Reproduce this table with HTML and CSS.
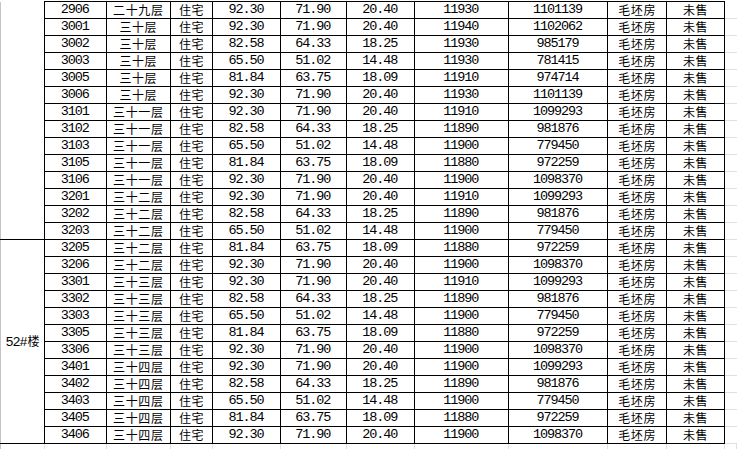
FILE: index.html
```html
<!DOCTYPE html>
<html lang="zh">
<head>
<meta charset="utf-8">
<title>52#楼</title>
<link rel="stylesheet" href="styles.css">
</head>
<body>
<table class="sheet">
<colgroup>
<col class="w-bld"><col class="w-no"><col class="w-fl"><col class="w-use"><col class="w-a"><col class="w-b"><col class="w-c"><col class="w-p"><col class="w-t"><col class="w-d"><col class="w-s"><col class="w-x">
</colgroup>
<tbody>
<tr><td class="bld top" rowspan="14"></td><td class="n">2906</td><td class="c">二十九层</td><td class="c">住宅</td><td class="n">92.30</td><td class="n">71.90</td><td class="n">20.40</td><td class="n">11930</td><td class="n">1101139</td><td class="c">毛坯房</td><td class="c">未售</td><td class="x"></td></tr>
<tr><td class="n">3001</td><td class="c">三十层</td><td class="c">住宅</td><td class="n">92.30</td><td class="n">71.90</td><td class="n">20.40</td><td class="n">11940</td><td class="n">1102062</td><td class="c">毛坯房</td><td class="c">未售</td><td class="x"></td></tr>
<tr><td class="n">3002</td><td class="c">三十层</td><td class="c">住宅</td><td class="n">82.58</td><td class="n">64.33</td><td class="n">18.25</td><td class="n">11930</td><td class="n">985179</td><td class="c">毛坯房</td><td class="c">未售</td><td class="x"></td></tr>
<tr><td class="n">3003</td><td class="c">三十层</td><td class="c">住宅</td><td class="n">65.50</td><td class="n">51.02</td><td class="n">14.48</td><td class="n">11930</td><td class="n">781415</td><td class="c">毛坯房</td><td class="c">未售</td><td class="x"></td></tr>
<tr><td class="n">3005</td><td class="c">三十层</td><td class="c">住宅</td><td class="n">81.84</td><td class="n">63.75</td><td class="n">18.09</td><td class="n">11910</td><td class="n">974714</td><td class="c">毛坯房</td><td class="c">未售</td><td class="x"></td></tr>
<tr><td class="n">3006</td><td class="c">三十层</td><td class="c">住宅</td><td class="n">92.30</td><td class="n">71.90</td><td class="n">20.40</td><td class="n">11930</td><td class="n">1101139</td><td class="c">毛坯房</td><td class="c">未售</td><td class="x"></td></tr>
<tr><td class="n">3101</td><td class="c">三十一层</td><td class="c">住宅</td><td class="n">92.30</td><td class="n">71.90</td><td class="n">20.40</td><td class="n">11910</td><td class="n">1099293</td><td class="c">毛坯房</td><td class="c">未售</td><td class="x"></td></tr>
<tr><td class="n">3102</td><td class="c">三十一层</td><td class="c">住宅</td><td class="n">82.58</td><td class="n">64.33</td><td class="n">18.25</td><td class="n">11890</td><td class="n">981876</td><td class="c">毛坯房</td><td class="c">未售</td><td class="x"></td></tr>
<tr><td class="n">3103</td><td class="c">三十一层</td><td class="c">住宅</td><td class="n">65.50</td><td class="n">51.02</td><td class="n">14.48</td><td class="n">11900</td><td class="n">779450</td><td class="c">毛坯房</td><td class="c">未售</td><td class="x"></td></tr>
<tr><td class="n">3105</td><td class="c">三十一层</td><td class="c">住宅</td><td class="n">81.84</td><td class="n">63.75</td><td class="n">18.09</td><td class="n">11880</td><td class="n">972259</td><td class="c">毛坯房</td><td class="c">未售</td><td class="x"></td></tr>
<tr><td class="n">3106</td><td class="c">三十一层</td><td class="c">住宅</td><td class="n">92.30</td><td class="n">71.90</td><td class="n">20.40</td><td class="n">11900</td><td class="n">1098370</td><td class="c">毛坯房</td><td class="c">未售</td><td class="x"></td></tr>
<tr><td class="n">3201</td><td class="c">三十二层</td><td class="c">住宅</td><td class="n">92.30</td><td class="n">71.90</td><td class="n">20.40</td><td class="n">11910</td><td class="n">1099293</td><td class="c">毛坯房</td><td class="c">未售</td><td class="x"></td></tr>
<tr><td class="n">3202</td><td class="c">三十二层</td><td class="c">住宅</td><td class="n">82.58</td><td class="n">64.33</td><td class="n">18.25</td><td class="n">11890</td><td class="n">981876</td><td class="c">毛坯房</td><td class="c">未售</td><td class="x"></td></tr>
<tr><td class="n">3203</td><td class="c">三十二层</td><td class="c">住宅</td><td class="n">65.50</td><td class="n">51.02</td><td class="n">14.48</td><td class="n">11900</td><td class="n">779450</td><td class="c">毛坯房</td><td class="c">未售</td><td class="x"></td></tr>
<tr><td class="bld" rowspan="12"><span class="lbl-n">52#</span><span class="lbl-c">楼</span></td><td class="n">3205</td><td class="c">三十二层</td><td class="c">住宅</td><td class="n">81.84</td><td class="n">63.75</td><td class="n">18.09</td><td class="n">11880</td><td class="n">972259</td><td class="c">毛坯房</td><td class="c">未售</td><td class="x"></td></tr>
<tr><td class="n">3206</td><td class="c">三十二层</td><td class="c">住宅</td><td class="n">92.30</td><td class="n">71.90</td><td class="n">20.40</td><td class="n">11900</td><td class="n">1098370</td><td class="c">毛坯房</td><td class="c">未售</td><td class="x"></td></tr>
<tr><td class="n">3301</td><td class="c">三十三层</td><td class="c">住宅</td><td class="n">92.30</td><td class="n">71.90</td><td class="n">20.40</td><td class="n">11910</td><td class="n">1099293</td><td class="c">毛坯房</td><td class="c">未售</td><td class="x"></td></tr>
<tr><td class="n">3302</td><td class="c">三十三层</td><td class="c">住宅</td><td class="n">82.58</td><td class="n">64.33</td><td class="n">18.25</td><td class="n">11890</td><td class="n">981876</td><td class="c">毛坯房</td><td class="c">未售</td><td class="x"></td></tr>
<tr><td class="n">3303</td><td class="c">三十三层</td><td class="c">住宅</td><td class="n">65.50</td><td class="n">51.02</td><td class="n">14.48</td><td class="n">11900</td><td class="n">779450</td><td class="c">毛坯房</td><td class="c">未售</td><td class="x"></td></tr>
<tr><td class="n">3305</td><td class="c">三十三层</td><td class="c">住宅</td><td class="n">81.84</td><td class="n">63.75</td><td class="n">18.09</td><td class="n">11880</td><td class="n">972259</td><td class="c">毛坯房</td><td class="c">未售</td><td class="x"></td></tr>
<tr><td class="n">3306</td><td class="c">三十三层</td><td class="c">住宅</td><td class="n">92.30</td><td class="n">71.90</td><td class="n">20.40</td><td class="n">11900</td><td class="n">1098370</td><td class="c">毛坯房</td><td class="c">未售</td><td class="x"></td></tr>
<tr><td class="n">3401</td><td class="c">三十四层</td><td class="c">住宅</td><td class="n">92.30</td><td class="n">71.90</td><td class="n">20.40</td><td class="n">11900</td><td class="n">1099293</td><td class="c">毛坯房</td><td class="c">未售</td><td class="x"></td></tr>
<tr><td class="n">3402</td><td class="c">三十四层</td><td class="c">住宅</td><td class="n">82.58</td><td class="n">64.33</td><td class="n">18.25</td><td class="n">11890</td><td class="n">981876</td><td class="c">毛坯房</td><td class="c">未售</td><td class="x"></td></tr>
<tr><td class="n">3403</td><td class="c">三十四层</td><td class="c">住宅</td><td class="n">65.50</td><td class="n">51.02</td><td class="n">14.48</td><td class="n">11900</td><td class="n">779450</td><td class="c">毛坯房</td><td class="c">未售</td><td class="x"></td></tr>
<tr><td class="n">3405</td><td class="c">三十四层</td><td class="c">住宅</td><td class="n">81.84</td><td class="n">63.75</td><td class="n">18.09</td><td class="n">11880</td><td class="n">972259</td><td class="c">毛坯房</td><td class="c">未售</td><td class="x"></td></tr>
<tr><td class="n">3406</td><td class="c">三十四层</td><td class="c">住宅</td><td class="n">92.30</td><td class="n">71.90</td><td class="n">20.40</td><td class="n">11900</td><td class="n">1098370</td><td class="c">毛坯房</td><td class="c">未售</td><td class="x"></td></tr>
<tr class="tail"><td></td><td></td><td></td><td></td><td></td><td></td><td></td><td></td><td></td><td></td><td></td><td class="x"></td></tr>
</tbody>
</table>
</body>
</html>
```

FILE: styles.css
```css
html, body {
  margin: 0;
  padding: 0;
  background: #ffffff;
  overflow: hidden;
}

body {
  font-family: "Liberation Mono", "Noto Sans CJK SC", monospace;
  font-size: 14px;
  color: #000000;
}

.sheet {
  border-collapse: collapse;
  table-layout: fixed;
  margin-top: 1px;
}

.w-bld { width: 44px; }
.w-no { width: 63px; }
.w-fl { width: 64px; }
.w-use { width: 43px; }
.w-a { width: 68px; }
.w-b { width: 67px; }
.w-c { width: 69px; }
.w-p { width: 95px; }
.w-t { width: 101px; }
.w-d { width: 59px; }
.w-s { width: 59px; }
.w-x { width: 12px; }

.sheet td {
  border: 1px solid #000000;
  padding: 0;
  height: 16px;
  line-height: 16px;
  text-align: center;
  white-space: nowrap;
  overflow: hidden;
}

.sheet td.n {
  font-size: 13.5px;
  letter-spacing: -1.1px;
  text-indent: -1px;
}

.sheet td.c {
  font-family: "Noto Sans CJK SC", sans-serif;
  font-size: 12px;
  letter-spacing: 0.6px;
}

.sheet td.bld {
  border-left: 1px solid #c4c4c4;
  vertical-align: middle;
}

.lbl-n {
  font-size: 13.5px;
  letter-spacing: -1.1px;
}

.lbl-c {
  font-family: "Noto Sans CJK SC", sans-serif;
  font-size: 12px;
  padding-left: 1px;
}

.sheet td.top {
  border-top: none;
}

.sheet td.x {
  border-top: none;
  border-right: none;
  border-bottom: 1px solid #e0e0e0;
}

.sheet tr.tail td {
  border-top: 1px solid #000000;
  border-left: 1px solid #e0e0e0;
  border-right: 1px solid #e0e0e0;
  border-bottom: 1px solid #e0e0e0;
  height: 8px;
}

.sheet tr.tail td:first-child {
  border-left: 1px solid #c4c4c4;
}
```
